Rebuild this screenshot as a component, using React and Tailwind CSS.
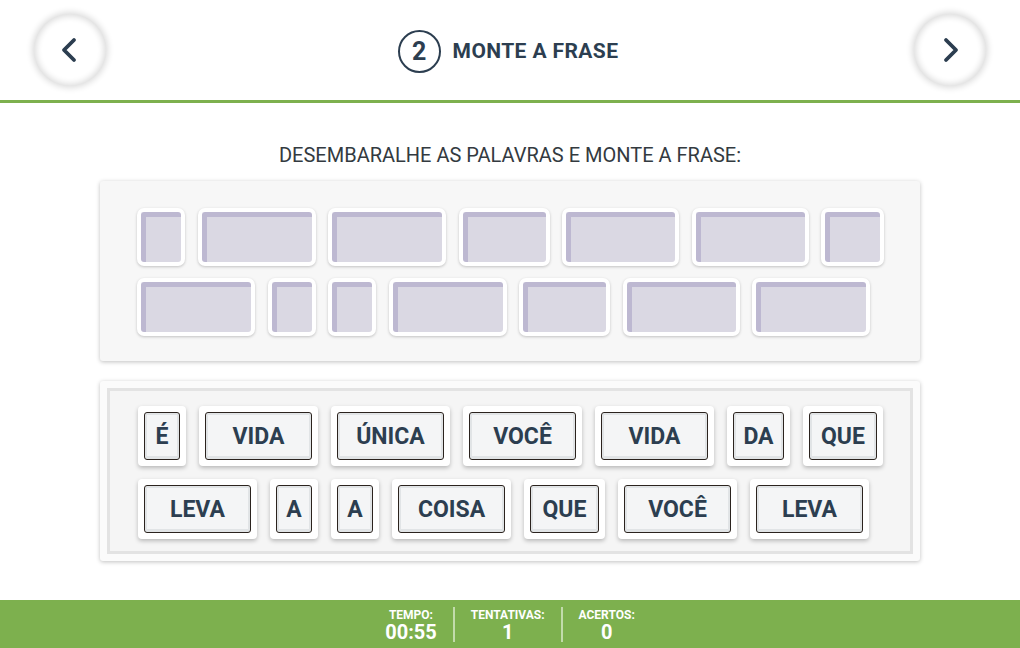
import { ChevronLeft, ChevronRight } from 'lucide-react';

// posições vazias (gabarito) – largura em px de cada caixa
const slotRows = [
  ['w-[48px]', 'w-[118px]', 'w-[118px]', 'w-[91px]', 'w-[117px]', 'w-[117px]', 'w-[63px]'],
  ['w-[118px]', 'w-[48px]', 'w-[48px]', 'w-[118px]', 'w-[91px]', 'w-[117px]', 'w-[118px]'],
];

// palavras embaralhadas
const wordRows = [
  [
    { text: 'É', w: 'w-[48px]' },
    { text: 'VIDA', w: 'w-[119px]' },
    { text: 'ÚNICA', w: 'w-[119px]' },
    { text: 'VOCÊ', w: 'w-[119px]' },
    { text: 'VIDA', w: 'w-[119px]' },
    { text: 'DA', w: 'w-[63px]' },
    { text: 'QUE', w: 'w-[80px]' },
  ],
  [
    { text: 'LEVA', w: 'w-[119px]' },
    { text: 'A', w: 'w-[48px]' },
    { text: 'A', w: 'w-[48px]' },
    { text: 'COISA', w: 'w-[119px]' },
    { text: 'QUE', w: 'w-[81px]' },
    { text: 'VOCÊ', w: 'w-[119px]' },
    { text: 'LEVA', w: 'w-[119px]' },
  ],
];

function NavButton({ children }) {
  return (
    <button className="w-[72px] h-[72px] rounded-full bg-white flex items-center justify-center text-[#2c3e50] shadow-[0_0_6px_2px_rgba(0,0,0,0.14),inset_0_0_6px_2px_rgba(0,0,0,0.14)]">
      {children}
    </button>
  );
}

function Slot({ w }) {
  return (
    <div className={`${w} h-[58px] bg-white rounded-[7px] p-[4px] shadow-[0_1px_3px_rgba(0,0,0,0.22)]`}>
      <div className="h-full rounded-[3px] bg-[#dad8e3] border-t-[5px] border-l-[5px] border-[#bdb8d1]" />
    </div>
  );
}

function Word({ text, w }) {
  return (
    <div className={`${w} h-[60px] bg-white rounded-[4px] p-[6px] shadow-[0_2px_4px_rgba(0,0,0,0.25)]`}>
      <div className="h-full pt-[2px] rounded-[3px] border border-[#2b231e] bg-[#f4f5f6] shadow-[inset_0_0_0_2px_#e1e4e6,inset_0_-3px_0_0_#e1e4e6] flex items-center justify-center text-[23px] font-bold text-[#2c3e50]">
        {text}
      </div>
    </div>
  );
}

function Stat({ label, value, first }) {
  return (
    <div className={`px-4 h-[35px] flex flex-col items-center justify-center text-white font-bold ${first ? '' : 'border-l-2 border-[#c2dbab]'}`}>
      <span className="text-[12px] leading-[13px] mt-[3px]">{label}</span>
      <span className="text-[20px] leading-[20px]">{value}</span>
    </div>
  );
}

export default function App() {
  return (
    <div className="w-[1020px] h-[648px] flex flex-col bg-white font-['Roboto','Liberation_Sans',sans-serif]">
      <header className="h-[103px] shrink-0 border-b-[3px] border-[#7db04e] flex items-center justify-between px-[34px]">
        <NavButton>
          <ChevronLeft size={40} strokeWidth={2.3} className="-ml-[2px]" />
        </NavButton>
        <div className="flex items-center gap-3 text-[#2c3e50] ml-[-4px] mt-[3px]">
          <div className="w-[43px] h-[43px] rounded-full border-2 border-[#2c3e50] flex items-center justify-center text-[25px] font-bold">
            2
          </div>
          <h1 className="text-[21px] font-bold tracking-[0.4px]">MONTE A FRASE</h1>
        </div>
        <NavButton>
          <ChevronRight size={40} strokeWidth={2.3} className="ml-[2px]" />
        </NavButton>
      </header>

      <main className="flex-1 flex flex-col items-center pt-[40px]">
        <p className="text-[20px] leading-[24px] text-[#333a40] mb-[14px]">
          DESEMBARALHE AS PALAVRAS E MONTE A FRASE:
        </p>

        <section className="w-[820px] h-[180px] bg-[#f7f7f7] rounded-[3px] shadow-[0_1px_4px_rgba(0,0,0,0.25)] pt-[27px] pl-[37px] flex flex-col gap-3">
          {slotRows.map((row, i) => (
            <div key={i} className="flex gap-[12.5px]">
              {row.map((w, j) => (
                <Slot key={j} w={w} />
              ))}
            </div>
          ))}
        </section>

        <section className="mt-[20px] w-[820px] h-[180px] bg-[#fbfbfb] rounded-[3px] shadow-[0_1px_4px_rgba(0,0,0,0.25)] p-[7px]">
          <div className="h-full border-[3px] border-[#e3e3e3] bg-[#f5f5f5] pt-[15px] pl-[28px] flex flex-col gap-[13px]">
            {wordRows.map((row, i) => (
              <div key={i} className="flex gap-[13px]">
                {row.map((word, j) => (
                  <Word key={j} {...word} />
                ))}
              </div>
            ))}
          </div>
        </section>
      </main>

      <footer className="h-[48px] shrink-0 bg-[#7db04e] flex items-center justify-center">
        <Stat label="TEMPO:" value="00:55" first />
        <Stat label="TENTATIVAS:" value="1" />
        <Stat label="ACERTOS:" value="0" />
      </footer>
    </div>
  );
}
